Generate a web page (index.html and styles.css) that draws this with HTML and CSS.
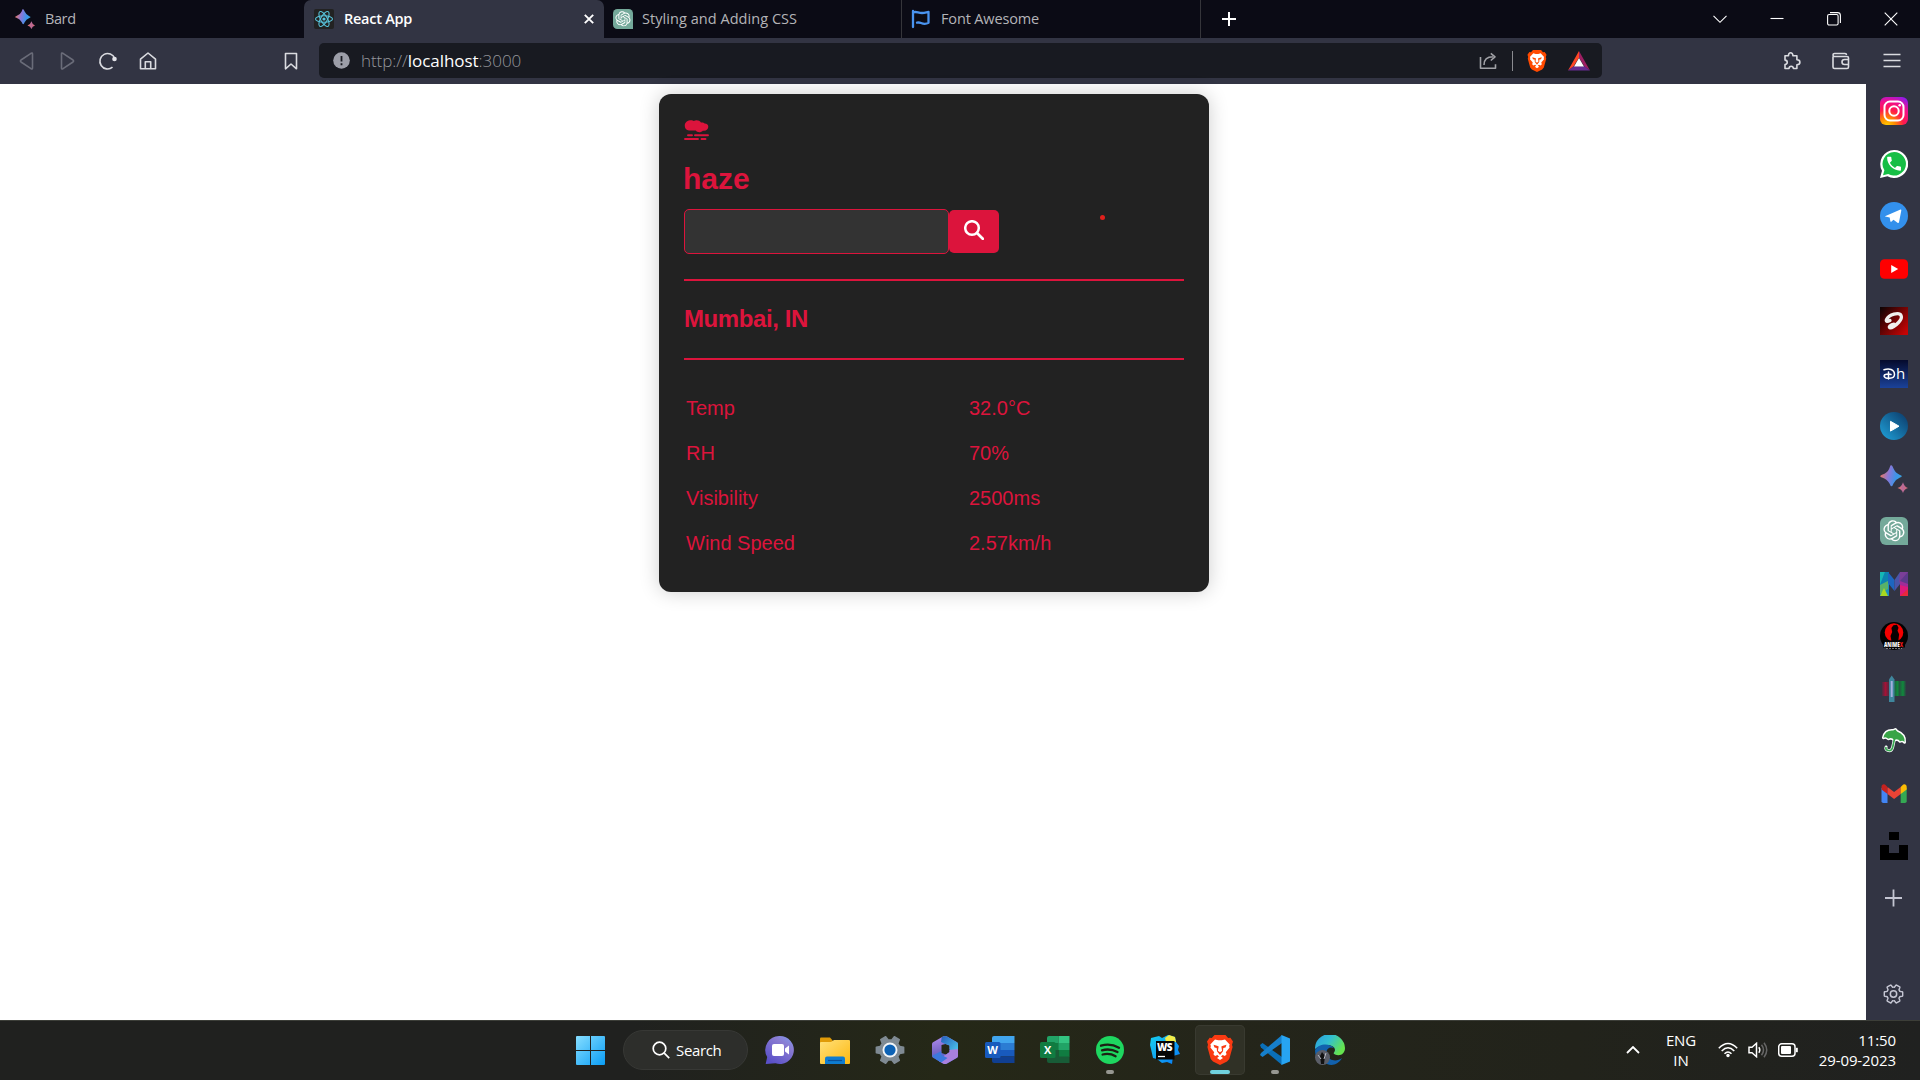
FILE: index.html
```html
<!DOCTYPE html>
<html lang="en">
<head>
<meta charset="utf-8">
<title>React App</title>
<link rel="stylesheet" href="styles.css">
</head>
<body>
<svg class="defs" width="0" height="0" aria-hidden="true">
  <defs>
    <linearGradient id="bardFill" x1="0" y1=".3" x2="1" y2=".5"><stop offset="0" stop-color="#f0785a"/><stop offset=".4" stop-color="#8a78d8"/><stop offset=".75" stop-color="#3d94e8"/><stop offset="1" stop-color="#3aa0dc"/></linearGradient>
    <linearGradient id="bardSmall" x1="0" y1="0" x2="1" y2="0"><stop offset="0" stop-color="#e8786a"/><stop offset=".5" stop-color="#b86a9a"/><stop offset="1" stop-color="#dc6a70"/></linearGradient>
    <symbol id="bard" viewBox="0 0 28 28"><path fill="url(#bardFill)" d="M11 0Q12.400 0 13.500 3.500Q15.500 8 20 10Q23.500 11.200 20 12.600Q15.500 14.500 13.500 18.500Q11.500 24 9.500 18.500Q7 14 2 12.400Q-1.500 11.200 2 9.800Q7.500 8 9.300 3.500Q10.300 0 11 0Z"/><path fill="url(#bardSmall)" d="M23 17.300Q24.200 21.800 28 23Q24.200 24.200 23 28Q21.800 24.200 17.500 23Q21.800 21.800 23 17.300Z"/></symbol>
    <symbol id="gpt" viewBox="0 0 28 28"><path fill="#74a99a" d="M6 0H22a6 6 0 0 1 6 6V28H6a6 6 0 0 1-6-6V6a6 6 0 0 1 6-6Z"/><path transform="translate(3.400 3.200) scale(.88)" fill="#fff" d="M22.2819 9.8211a5.9847 5.9847 0 0 0-.5157-4.9108 6.0462 6.0462 0 0 0-6.5098-2.9A6.0651 6.0651 0 0 0 4.9807 4.1818a5.9847 5.9847 0 0 0-3.9977 2.9 6.0462 6.0462 0 0 0 .7427 7.0966 5.98 5.98 0 0 0 .511 4.9107 6.051 6.051 0 0 0 6.5146 2.9001A5.9847 5.9847 0 0 0 13.2599 24a6.0557 6.0557 0 0 0 5.7718-4.2058 5.9894 5.9894 0 0 0 3.9977-2.9001 6.0557 6.0557 0 0 0-.7475-7.0729zm-9.022 12.6081a4.4755 4.4755 0 0 1-2.8764-1.0408l.1419-.0804 4.7783-2.7582a.7948.7948 0 0 0 .3927-.6813v-6.7369l2.02 1.1686a.071.071 0 0 1 .038.052v5.5826a4.504 4.504 0 0 1-4.4945 4.4944zm-9.6607-4.1254a4.4708 4.4708 0 0 1-.5346-3.0137l.142.0852 4.783 2.7582a.7712.7712 0 0 0 .7806 0l5.8428-3.3685v2.3324a.0804.0804 0 0 1-.0332.0615L9.74 19.9502a4.4992 4.4992 0 0 1-6.1408-1.6464zM2.3408 7.8956a4.485 4.485 0 0 1 2.3655-1.9728V11.6a.7664.7664 0 0 0 .3879.6765l5.8144 3.3543-2.0201 1.1685a.0757.0757 0 0 1-.071 0l-4.8303-2.7865A4.504 4.504 0 0 1 2.3408 7.872zm16.5963 3.8558L13.1038 8.364 15.1192 7.2a.0757.0757 0 0 1 .071 0l4.8303 2.7913a4.4944 4.4944 0 0 1-.6765 8.1042v-5.6772a.79.79 0 0 0-.407-.667zm2.0107-3.0231l-.142-.0852-4.7735-2.7818a.7759.7759 0 0 0-.7854 0L9.409 9.2297V6.8974a.0662.0662 0 0 1 .0284-.0615l4.8303-2.7866a4.4992 4.4992 0 0 1 6.6802 4.66zM8.3065 12.863l-2.02-1.1638a.0804.0804 0 0 1-.038-.0567V6.0742a4.4992 4.4992 0 0 1 7.3757-3.4537l-.142.0805L8.704 5.459a.7948.7948 0 0 0-.3927.6813zm1.0976-2.3654l2.602-1.4998 2.6069 1.4998v2.9994l-2.5974 1.4997-2.6067-1.4997Z"/></symbol>
    <symbol id="brave" viewBox="0 0 26 30"><path d="M7.500 0h11l2.700 3 2.200-.3L26 6.500l-1 3.200.6 2.300-3.300 12L20 26.500 13 30 6 26.500 3.700 24 .4 12 1 9.700 0 6.500 2.600 2.700l2.200.3Z"/><path fill="#fff" d="M8 4.500l3.300.8h3.400l3.300-.8 4.700 5-.6 1.500.5 1.500-3.800 4.700.8 2.100-1.700 1.700-2.300-.9-1.600 1.300L16 23l-3 2-3-2 2-1.600-1.600-1.300-2.300.9-1.700-1.700.8-2.100-3.800-4.700.5-1.500L3.300 9.500Z"/><path d="M6.500 9.800l3.500 1 1.700.8-.8 4.200 2.100 1.500 2.100-1.500-.8-4.200 1.700-.8 3.500-1-1 2.700-2.200.6-.3 3.200-3 3.700-3-3.700-.3-3.200-2.200-.6Z"/></symbol>
    <symbol id="gear" viewBox="0 0 24 24"><path transform="rotate(30 12 12)" d="M19.140 12.940c.04-.3.06-.61.06-.94 0-.32-.02-.64-.07-.94l2.030-1.580c.18-.14.23-.41.12-.61l-1.920-3.320c-.12-.22-.37-.29-.59-.22l-2.390.96c-.5-.38-1.030-.7-1.620-.94l-.36-2.540c-.04-.24-.24-.41-.48-.41h-3.840c-.24 0-.43.17-.47.41l-.36 2.540c-.59.24-1.130.57-1.620.94l-2.390-.96c-.22-.08-.47 0-.59.22L2.740 8.870c-.12.21-.08.47.12.61l2.030 1.580c-.05.3-.09.63-.09.94s.02.64.07.94l-2.030 1.580c-.18.14-.23.41-.12.61l1.920 3.320c.12.22.37.29.59.22l2.390-.96c.5.38 1.030.7 1.620.94l.36 2.540c.05.24.24.41.48.41h3.840c.24 0 .44-.17.47-.41l.36-2.540c.59-.24 1.130-.56 1.620-.94l2.390.96c.22.08.47 0 .59-.22l1.920-3.320c.12-.22.07-.47-.12-.61z"/></symbol>
  </defs>
</svg>

<header class="tabs">
  <div class="tab tab-first"><svg width="20" height="20"><use href="#bard"/></svg><span>Bard</span></div>
  <div class="tab tab-active">
    <svg width="20" height="20" viewBox="0 0 20 20"><rect width="20" height="20" rx="2" fill="#222"/><g fill="none" stroke="#58c4dc" stroke-width="1.100"><ellipse cx="10" cy="10" rx="8.500" ry="3.300"/><ellipse cx="10" cy="10" rx="8.500" ry="3.300" transform="rotate(60 10 10)"/><ellipse cx="10" cy="10" rx="8.500" ry="3.300" transform="rotate(120 10 10)"/></g><circle cx="10" cy="10" r="1.600" fill="#58c4dc"/></svg>
    <span>React App</span>
    <svg class="tab-close" width="10" height="10" viewBox="0 0 10 10"><path d="M.8.8l8.400 8.400M9.200.8L.8 9.200" stroke="#fff" stroke-width="1.900"/></svg>
  </div>
  <div class="tab tab-gpt"><svg width="20" height="20"><use href="#gpt"/></svg><span>Styling and Adding CSS</span></div>
  <div class="tab tab-fa"><svg width="20" height="20" viewBox="0 0 20 20" fill="none" stroke="#4a94f0" stroke-width="2.300" stroke-linecap="round" stroke-linejoin="round"><path d="M2 2v16M2 3.500c3-1.500 5 .5 9 .5 3 0 4-.7 6.500-1.200v11c-3 1.700-5 1.200-7.500.2-1-.4-2.500-.7-4-.3"/></svg><span>Font Awesome</span></div>
  <svg class="tab-new" width="14" height="14" viewBox="0 0 14 14"><path d="M7 0v14M0 7h14" stroke="#fff" stroke-width="2"/></svg>
  <div class="window-controls">
    <svg width="14" height="14" viewBox="0 0 14 14"><path d="M.5 3.800l6.500 6.500 6.500-6.500"/></svg>
    <svg width="14" height="14" viewBox="0 0 14 14"><path d="M.5 6.500h13"/></svg>
    <svg width="14" height="14" viewBox="0 0 14 14"><rect x=".6" y="2.500" width="10.500" height="10.500" rx="1.500"/><path d="M3 .6h7.500a2.900 2.900 0 0 1 2.900 2.900V11"/></svg>
    <svg width="14" height="14" viewBox="0 0 14 14"><path d="M.7.7l12.600 12.600M13.300.7L.7 13.300"/></svg>
  </div>
</header>

<nav class="toolbar">
  <div class="nav-buttons">
    <svg width="16" height="20" viewBox="0 0 16 20" class="dim"><path d="M13.500 3q0-1.600-1.500-.7L2 9q-1.200 1 0 2l10 6.700q1.500.9 1.500-.7Z"/></svg>
    <svg width="16" height="20" viewBox="0 0 16 20" class="dim"><path d="M2.500 3q0-1.600 1.500-.7L14 9q1.200 1 0 2L4 17.700q-1.500.9-1.500-.7Z"/></svg>
    <svg width="20" height="20" viewBox="0 0 20 20"><path d="M14.500 16.200A7.700 7.700 0 1 1 16.800 7.500"/><circle cx="16.500" cy="8" r="2.300" class="solid"/></svg>
    <svg width="20" height="20" viewBox="0 0 20 20"><path d="M2.500 8.200L10 2l7.500 6.200V17.700h-15ZM7.300 17.500v-6.700h5.400v6.700"/></svg>
    <svg class="bookmark" width="14" height="20" viewBox="0 0 14 20"><path d="M1.500 2.500h11v15.300L7 13l-5.500 4.800Z"/></svg>
  </div>
  <div class="address">
    <svg width="17" height="17" viewBox="0 0 17 17"><circle cx="8.500" cy="8.500" r="8.300" fill="#9c9ea8"/><path d="M8.500 4v5.500M8.500 11.200v2" stroke="#181a21" stroke-width="1.800"/></svg>
    <p class="url">http://<b>localhost</b>:3000</p>
    <svg class="share" width="18" height="18" viewBox="0 0 18 18"><path d="M1.500 5v11.300h15v-4M5 13c0-5 3-8.200 9-8.200M11.800 1.300L16 4.800l-4.200 3.700"/></svg>
    <i class="address-line"></i>
    <svg class="shield" width="20" height="22" fill="#ff4a00"><use href="#brave"/></svg>
    <svg width="22" height="20" viewBox="0 0 22 20"><path d="M11 0v6.500L5.500 15.500 0 19.500Z" fill="#ff4724"/><path d="M11 0l11 19.500-5.500-4L11 6.500Z" fill="#9e1f63"/><path d="M0 19.500l5.500-4.200h11l5.500 4.200Z" fill="#662d91"/><path d="M11 7l5 8.500H6Z" fill="#fff"/></svg>
  </div>
  <div class="extras">
    <svg width="18" height="18" viewBox="0 0 18 18"><path d="M2 3.800h3.500c-.3-4 4.500-4 4.400 0h4v4c4 0 4 5 0 5v3.700h-3.500c-.2-3-4.200-3-4.400 0H2v-4c3-.4 3-4.200 0-4.400Z"/></svg>
    <svg width="18" height="18" viewBox="0 0 18 18"><path d="M1 4.500V15q0 1.500 1.500 1.500H15q1.500 0 1.500-1.500V6q0-1.500-1.500-1.500H2.500Q1 4.500 1 3t1.500-1.500H13q1.500 0 1.500 1.500M16.500 7.500h-4a2.500 2.500 0 0 0 0 5h4Z"/></svg>
    <svg width="18" height="18" viewBox="0 0 18 18"><path d="M.5 2.500h17M.5 8.500h17M.5 14.500h17"/></svg>
  </div>
</nav>

<div class="viewport">
  <main class="page">
    <section class="card">
      <svg class="cloud" width="25" height="20" viewBox="0 0 25 20"><path d="M6 .3C8 .1 9 .5 9.800 1 12-.5 15.500 0 17 2.500c2-.1 3 .3 3.500 1 6.500.2 3.800 8.500-1.700 7.200-1.800 2.100-5.800 1.900-7-.2H5C-.8 10-.8 1 6 .3Z"/><path d="M4 15.200h4M11 15.200h13M1 19h13M17.500 19h4" fill="none" stroke="#dc143c" stroke-width="1.900" stroke-linecap="round"/></svg>
      <h1>haze</h1>
      <div class="search-row">
        <input class="city" type="text" aria-label="City">
        <button class="go" aria-label="Search"><svg width="20" height="20" viewBox="0 0 20 20"><circle cx="8" cy="8" r="6.800" fill="none" stroke="#fff" stroke-width="2.500"/><path d="M13 13l5.800 5.800" stroke="#fff" stroke-width="2.700" stroke-linecap="round"/></svg></button>
        <i class="dot"></i>
      </div>
      <h2>Mumbai, IN</h2>
      <dl class="readings">
        <dt>Temp</dt><dd>32.0°C</dd>
        <dt>RH</dt><dd>70%</dd>
        <dt>Visibility</dt><dd>2500ms</dd>
        <dt>Wind Speed</dt><dd>2.57km/h</dd>
      </dl>
    </section>
  </main>
  <aside class="sidebar">
    <svg viewBox="0 0 28 28"><defs><radialGradient id="ig" cx=".25" cy="1.050" r="1.200"><stop offset="0" stop-color="#ffd600"/><stop offset=".25" stop-color="#ff8a00"/><stop offset=".5" stop-color="#ff1a4b"/><stop offset=".75" stop-color="#f0108c"/><stop offset="1" stop-color="#8a1cf0"/></radialGradient></defs><rect width="28" height="28" rx="6" fill="url(#ig)"/><g fill="none" stroke="#fff" stroke-width="2"><rect x="4.500" y="4.500" width="19" height="19" rx="5.500"/><circle cx="14" cy="14" r="4.700"/></g><circle cx="19.700" cy="8.300" r="1.300" fill="#fff"/></svg>
    <svg viewBox="0 0 28 28"><path d="M14 0a14 14 0 1 1-6.500 26.300L0 28l2-7.200A14 14 0 0 1 14 0Z" fill="#fff"/><path d="M14.200 2a11.800 11.800 0 1 1-6 22L3 25.200l1.400-5A11.900 11.900 0 0 1 14.200 2Z" fill="#16be45"/><path transform="translate(4.800 4.500) scale(.77)" fill="#fff" d="M6.620 10.790c1.440 2.830 3.760 5.140 6.590 6.590l2.200-2.200c.27-.27.67-.36 1.020-.24 1.120.37 2.330.57 3.570.57.55 0 1 .45 1 1V20c0 .55-.45 1-1 1-9.390 0-17-7.610-17-17 0-.55.45-1 1-1h3.500c.55 0 1 .45 1 1 0 1.250.2 2.450.57 3.570.11.35.03.74-.25 1.020l-2.200 2.200z"/></svg>
    <svg viewBox="0 0 28 28"><circle cx="14" cy="14" r="14" fill="#3390ec"/><path d="M5 14.200L20.500 7.600q1-.2.800 1L19 20.300q-.4 1.200-1.500.5l-4-3-2.200 2q-.8.300-1-.8l-.6-3.500-4.500-1q-.7-.2-.2-.3Z" fill="#fff"/></svg>
    <svg viewBox="0 0 28 28"><rect y="4.200" width="28" height="19.600" rx="4.500" fill="#f00"/><path d="M11.200 10v8l7-4Z" fill="#fff"/></svg>
    <svg viewBox="0 0 28 28"><defs><linearGradient id="air" x1="0" y1="0" x2="1" y2=".8"><stop offset="0" stop-color="#0a0303"/><stop offset="1" stop-color="#c40404"/></linearGradient></defs><rect width="28" height="28" fill="url(#air)"/><path fill="none" stroke="#f0f0ee" stroke-width="3.300" stroke-linecap="round" stroke-linejoin="round" d="M10 13.500C3.500 17 6 9.500 14 7.200c8-2 9.500 3 4.500 8.300-3 3.200-7 5.300-8.500 5.300-2-.3.500-3.300 4-3.600"/></svg>
    <svg viewBox="0 0 28 28"><defs><linearGradient id="dis" x2="0" y2="1"><stop offset="0" stop-color="#050a2c"/><stop offset="1" stop-color="#1b4299"/></linearGradient></defs><rect width="28" height="28" fill="url(#dis)"/><path fill="none" stroke="#fff" stroke-width="1.500" stroke-linecap="round" d="M4 9.800c5-1.800 10.500-.5 10.500 4.700 0 5-9.500 4.500-10.500 1.400 0-1.800 4-2.200 7-1.400M8.500 12v7"/><text x="16" y="19" class="mark dh">h</text></svg>
    <svg viewBox="0 0 28 28"><defs><linearGradient id="jio" x1="1" x2="0" y2="1"><stop offset="0" stop-color="#0b3766"/><stop offset="1" stop-color="#20a4dc"/></linearGradient></defs><circle cx="14" cy="14" r="14" fill="url(#jio)"/><path d="M10.500 9.300v9.800l8.500-4.900Z" fill="#fff" stroke="#fff" stroke-linejoin="round"/></svg>
    <svg><use href="#bard"/></svg>
    <svg><use href="#gpt"/></svg>
    <svg viewBox="0 0 28 28"><path d="M0 2h9v24H0Z" fill="#1a8fc0"/><path d="M0 2h5L0 15Z" fill="#16b8b4"/><path d="M5 2h4l-1 9-8 4Z" fill="#0d84ae"/><path d="M0 15l8-4v8l-8 5Z" fill="#58b268"/><path d="M0 26l4-8 4 8Z" fill="#a8d820"/><path d="M8 2l6.500 8v11L8 13Z" fill="#1d66c0"/><path d="M20 2l-5.500 8v11L20 14Z" fill="#4a55a8"/><path d="M20 2h8v24h-8Z" fill="#a02c98"/><path d="M20 2h8L19 13Z" fill="#7a3f98"/><path d="M28 2v12l-8-3Z" fill="#5c3a8c"/><path d="M20 15l8 2v9h-8Z" fill="#dc1a7c"/><path d="M20 26l8-7v7Z" fill="#e8283c"/></svg>
    <svg viewBox="0 0 28 28"><circle cx="14" cy="14" r="14" fill="#030303"/><circle cx="14" cy="10.500" r="9.300" fill="#f40000"/><path d="M11.500 19l-1-5 1.700-4-.8-4 2-2.800 3.500-.4 1.600 3-1 3 1.600 3.500-.8 6.700Z" fill="#090202"/><rect x="3" y="18.500" width="22" height="7" fill="#030303"/><text x="4" y="24.500" textLength="19" lengthAdjust="spacingAndGlyphs" class="mark anime">ANIME<tspan class="red">X</tspan></text><path d="M6 26.500h16" stroke="#aaa" stroke-width=".7" stroke-dasharray="2 1"/></svg>
    <svg viewBox="0 0 28 28"><defs><linearGradient id="specL"><stop offset="0" stop-color="#a51236" stop-opacity=".2"/><stop offset=".5" stop-color="#a51236"/><stop offset="1" stop-color="#a51236" stop-opacity=".3"/></linearGradient><linearGradient id="specR"><stop offset="0" stop-color="#108a3c" stop-opacity=".4"/><stop offset=".3" stop-color="#108a3c"/><stop offset=".45" stop-color="#108a3c" stop-opacity=".4"/><stop offset=".75" stop-color="#108a3c"/><stop offset="1" stop-color="#108a3c" stop-opacity=".1"/></linearGradient></defs><path fill="url(#specL)" d="M2 7h7v14H2Z"/><path fill="url(#specR)" d="M14 6h12v15H14Z"/><path d="M9 4.500l2.700-4 2.800 4v22.500H9Z" fill="#4295ad" opacity=".85"/><path d="M11.700 6v16" stroke="#a4afe0" stroke-width="2"/></svg>
    <svg viewBox="0 0 28 28"><g transform="rotate(12 14 14)"><g stroke="#fff" stroke-width="3" stroke-linejoin="round" stroke-linecap="round" fill="none"><path d="M14 11v9q0 4.500-3.500 4.500T7.500 21.500"/><path d="M3 13Q3 5 11 4l2-1.500L15 4q9 1.500 9.500 9-2-2-4.500 0-3-2.500-6 0-3-2.500-6 0-3-2-5 0Z"/></g><path d="M14 11v9q0 4.500-3.500 4.500T7.500 21.500" stroke="#38a852" stroke-width="1.700" fill="none"/><path d="M3 13Q3 5 11 4l2-1.500L15 4q9 1.500 9.500 9-2-2-4.500 0-3-2.500-6 0-3-2.500-6 0-3-2-5 0Z" fill="#38a447"/></g></svg>
    <svg viewBox="0 0 28 28"><path d="M1.500 8h6v15H3.300q-1.800 0-1.800-1.800Z" fill="#4285f4"/><path d="M20.700 8h6v13.200q0 1.800-1.800 1.800h-4.200Z" fill="#34a853"/><path d="M7.500 7l6.600 5 6.600-5v7l-6.600 5-6.600-5Z" fill="#ea4335"/><path d="M1.500 8.500V7C1.500 4 4.500 3.500 6 5.500L7.500 7v7L1.500 9.500Z" fill="#c5221f"/><path d="M26.700 8.500V7c0-3-3-3.500-4.500-1.500L20.700 7v7l6-4.500Z" fill="#fbbc04"/></svg>
    <svg viewBox="0 0 28 28"><path d="M9 0h10v8H9ZM0 13h9v8h10v-8h9v15H0Z"/></svg>
    <svg class="line" viewBox="0 0 28 28"><path d="M13.500 4.500v17M5 13h17" stroke-width="1.800"/></svg>
    <svg class="line sidebar-gear" viewBox="0 0 28 28"><use href="#gear" x="2" y="2.500" width="23" height="23"/><circle cx="13.500" cy="14" r="3.200" stroke-width="1.500"/></svg>
  </aside>
</div>

<footer class="taskbar">
  <div class="apps">
    <svg class="start" width="29" height="29" viewBox="0 0 29 29"><defs><linearGradient id="win" x2="1" y2="1"><stop offset="0" stop-color="#86deff"/><stop offset="1" stop-color="#0a9df5"/></linearGradient></defs><path d="M1 0h13v14H0V1Q0 0 1 0ZM15 0h13q1 0 1 1v13H15ZM0 15h14v14H1q-1 0-1-1ZM15 15h14v13q0 1-1 1H15Z" fill="url(#win)"/></svg>
    <div class="search"><svg width="18" height="18" viewBox="0 0 18 18"><circle cx="7.500" cy="7.500" r="6.300"/><path d="M12.200 12.200l5 5"/></svg><span>Search</span></div>
    <div class="app"><svg viewBox="0 0 30 30"><defs><linearGradient id="chat" x1="1" x2=".3" y2="1"><stop offset="0" stop-color="#7f9cf0"/><stop offset=".35" stop-color="#8a7cd2"/><stop offset="1" stop-color="#5a50c8"/></linearGradient></defs><path d="M15 1a14 14 0 1 1-4.500 27.300L1 29q-.5 0 0-1.500l1.200-5.500A14 14 0 0 1 15 1Z" fill="url(#chat)"/><rect x="7" y="9" width="12" height="12" rx="2" fill="#fff"/><path d="M20 13.500l4-3v9l-4-3Z" fill="#fff"/></svg></div>
    <div class="app"><svg viewBox="0 0 30 30"><defs><linearGradient id="fold" x2="1" y2="1"><stop offset="0" stop-color="#ffe07a"/><stop offset="1" stop-color="#fdb910"/></linearGradient></defs><path d="M0 3.500Q0 2.500 1 2.500h9l3 3.500v6H0Z" fill="#e09b08"/><path d="M0 8q0-1 1-1h10l3-2h15q1 0 1 1V28q0 1-1 1H1q-1 0-1-1Z" fill="url(#fold)"/><path d="M5 29v-5.500q0-2 2-2h16q2 0 2 2V29Z" fill="#0e7cd0"/><path d="M8 25.500h14" stroke="#0a4f98" stroke-width="1.200"/></svg></div>
    <div class="app"><svg viewBox="0 0 30 30"><use href="#gear" x="-3" y="-3" width="36" height="36" fill="#7f8a93"/><circle cx="15" cy="15" r="7.500" fill="#f2f5f8"/><circle cx="15" cy="15" r="5.600" fill="#0d62b5"/></svg></div>
    <div class="app"><svg viewBox="0 0 30 30"><defs><linearGradient id="o1" x1=".3" x2=".5" y2="1"><stop offset="0" stop-color="#b48cf0"/><stop offset=".5" stop-color="#7a68c8"/><stop offset="1" stop-color="#2a62d0"/></linearGradient><linearGradient id="o2" x2="1" y2="1"><stop offset="0" stop-color="#2458b8"/><stop offset="1" stop-color="#54dcf8"/></linearGradient><clipPath id="hex"><path clip-rule="evenodd" d="M13 1.500q2-1 4 0l10 5.800q1 .7 1 2v11.400q0 1.300-1 2l-10 5.800q-2 1-4 0L3 22.700q-1-.7-1-2V9.300q0-1.300 1-2ZM11.500 10v8l4.500 1.500 3.500-2.500v-6.500L15.500 9Z"/></clipPath></defs><g clip-path="url(#hex)"><path d="M0 0h30v30H0Z" fill="url(#o1)"/><path d="M12 0h18v15l-3 5-8-6V11L11 7Z" fill="url(#o2)"/><path d="M30 13v17H6l5-7 8-6v-2l9-1Z" fill="#a880de"/><path d="M2 21l9.500-5v4l6 3-7 5Z" fill="#3c78dc"/></g></svg></div>
    <div class="app"><svg viewBox="0 0 30 30"><path d="M9 1h20.500v7H7V3q0-2 2-2Z" fill="#41a5ee"/><path d="M7 8h22.500v7H7Z" fill="#2b7cd3"/><path d="M7 15h22.500v6.500H7Z" fill="#185abd"/><path d="M7 21.500h22.500V28H9q-2 0-2-2Z" fill="#103f91"/><rect y="7" width="15.500" height="16" rx="1.500" fill="#185abd"/><text x="7.600" y="19" class="mark office">W</text></svg></div>
    <div class="app"><svg viewBox="0 0 30 30"><path d="M7 3q0-2 2-2h9.500v14H7Z" fill="#21a366"/><path d="M18.500 1h11v7h-11Z" fill="#33c481"/><path d="M7 8h11.500v7H7Z" fill="#107c41"/><path d="M18.500 8h11v7h-11Z" fill="#21a366"/><path d="M7 15h11.500v7H7Z" fill="#185c37"/><path d="M18.500 15h11v7h-11Z" fill="#107c41"/><path d="M7 21.500h22.500V28H9q-2 0-2-2Z" fill="#185c37"/><rect y="7" width="15.500" height="16" rx="1.500" fill="#107c41"/><text x="7.600" y="19" class="mark office">X</text></svg></div>
    <div class="app running"><svg viewBox="0 0 30 30"><circle cx="15" cy="15" r="14" fill="#1ed760"/><path d="M6 10.700q9.500-2.700 18 2M7 15.300q8-2.200 15.500 1.700M7.600 19.500q7-1.700 13 1.700" fill="none" stroke="#1c2114" stroke-width="2.300" stroke-linecap="round"/></svg></div>
    <div class="app"><svg viewBox="0 0 30 30"><defs><linearGradient id="ws" y2="1"><stop offset="0" stop-color="#18d0f0"/><stop offset="1" stop-color="#0878f5"/></linearGradient></defs><path d="M1 3l8-2 3 2 6-3 7 2 1 5 3 4-1 4 2 4-7 2-1 8-5-2-5 1-5-4-4-1-2-9-1-4Z" fill="url(#ws)"/><path d="M15 3l4-3 6 2 1 5H16Z" fill="#f2ed48"/><rect x="6" y="6" width="18.500" height="18.500" fill="#050505"/><text x="7" y="15.500" textLength="15.500" class="mark ws">WS</text><path d="M8 21.500h7" stroke="#fff" stroke-width="1.300"/></svg></div>
    <div class="app running current"><svg viewBox="0 0 30 30" fill="#fa3a12"><use href="#brave" x="2" y="0" width="26" height="30"/></svg></div>
    <div class="app running"><svg viewBox="0 0 30 30"><path d="M0 10l2.500-2L22 22v8L1 12.500Z" fill="#0a6fb8"/><path d="M0 20l2.500 2L22 8V0L1 18Z" fill="#167fcb"/><path d="M21.500 0L30 3.500v23L21.500 30Z" fill="#27a4f2"/></svg></div>
    <div class="app"><svg viewBox="0 0 30 30"><defs><linearGradient id="edge" x2="1" y2=".5"><stop offset="0" stop-color="#2a9be0"/><stop offset=".5" stop-color="#32bfd0"/><stop offset="1" stop-color="#65e34f"/></linearGradient></defs><path d="M0 14A15 14.500 0 0 1 30 13c0 6-5 8.500-10 6.500-3-1.200 0-2 0-4.500C20 9 7 8 0 14Z" fill="url(#edge)"/><path d="M0 15C4 8 15 8 19 13c-5-2-9 2-7 7 2 6 10 7 15 3-4 7-10 8-15 6Q0 27 0 15Z" fill="#1261ad"/><circle cx="7.500" cy="22.500" r="7.500" fill="#5b5e68"/><path d="M7 17l3 4-1 8H6l-1-8Z" fill="#111"/><path d="M3 20l3 4M11 18l-2 6" stroke="#b8bac4"/></svg></div>
  </div>
  <div class="tray">
    <svg class="more" width="14" height="8" viewBox="0 0 14 8"><path d="M1 7l6-6 6 6" stroke-width="1.800"/></svg>
    <p class="lang">ENG<br>IN</p>
    <svg width="20" height="16" viewBox="0 0 20 16"><g stroke-width="1.500"><path d="M.8 6.200q9.200-9.500 18.400 0M3.700 9q6.300-6.500 12.600 0M6.500 11.700q3.500-3.500 7 0"/></g><circle cx="10" cy="13.500" r="1.700" fill="#fff" stroke="none"/></svg>
    <svg width="20" height="16" viewBox="0 0 20 16"><path d="M1 5.200h3L8.500 1.300v13.400L4 10.800H1ZM10.800 5.300q2 2.700 0 5.400"/><path d="M13.500 2.800q4 5.200 0 10.400M16 .7q5.500 7.300 0 14.600" stroke="#666"/></svg>
    <svg width="20" height="16" viewBox="0 0 20 16"><rect x=".7" y="1.800" width="16.300" height="12.400" rx="3"/><rect x="3" y="4" width="10" height="8" rx="1" fill="#fff" stroke="none"/><path d="M18.800 5.800v4.400" stroke-width="2"/></svg>
    <p class="clock">11:50<br>29-09-2023</p>
  </div>
</footer>
</body>
</html>
```
FILE: styles.css
```css
* { box-sizing: border-box; }
body {
  margin: 0;
  width: 1920px;
  height: 1080px;
  overflow: hidden;
  display: flex;
  flex-direction: column;
  background: #fff;
  font-family: "Open Sans", "Noto Sans", sans-serif;
}
svg { display: block; flex: none; }
p, h1, h2, dl, dd { margin: 0; }
.defs { position: absolute; }

/* Tab strip */
.tabs { display: flex; height: 38px; background: #0b0b15; color: #b4b4b8; font-size: 14.500px; letter-spacing: .05px; }
.tab { display: flex; align-items: center; gap: 9px; height: 38px; white-space: nowrap; }
.tab span { padding-bottom: 2px; }
.tab-first { width: 304px; padding-left: 15px; gap: 10px; letter-spacing: -.4px; }
.tab-active { width: 300px; padding: 0 10px; gap: 10px; background: #323443; color: #fff; font-weight: 600; letter-spacing: -.25px; border-radius: 7px 7px 0 0; }
.tab-close { margin-left: auto; }
.tab-gpt { width: 298px; padding-left: 9px; border-right: 1px solid #35353a; }
.tab-fa { width: 299px; padding-left: 9px; gap: 10px; border-right: 1px solid #35353a; letter-spacing: -.15px; }
.tab-new { align-self: center; margin-left: 21px; }
.window-controls { display: flex; align-items: center; gap: 43px; margin-left: auto; padding-right: 22px; }
.window-controls svg { fill: none; stroke: #fff; stroke-width: 1.100; }

/* Toolbar */
.toolbar { display: flex; align-items: center; height: 46px; padding: 0 0 1px 19px; background: #323443; }
.nav-buttons { display: flex; align-items: center; width: 300px; gap: 24px; }
.nav-buttons svg, .extras svg, .share { fill: none; stroke: #dadbe0; stroke-width: 1.600; stroke-linejoin: round; }
.nav-buttons .dim { stroke: #6a6c79; width: 16px; }
.nav-buttons .dim + svg:not(.dim) { margin-left: -1px; }
.nav-buttons svg:nth-child(4) { margin-left: -4px; }
.nav-buttons .bookmark { margin-left: 102px; }
.nav-buttons .solid { fill: #e4e4ea; stroke: none; }
.address { display: flex; align-items: center; width: 1283px; height: 35px; padding: 0 12px 0 14px; border-radius: 5px; background: #181a21; }
.url { flex: 1; margin-left: 11px; padding-bottom: 1px; font-size: 17px; letter-spacing: -.05px; font-weight: 300; color: #96979c; }
.url b { font-weight: 400; color: #fff; }
.address .share { margin-right: 1px; stroke: #a0a1a6; }
.address-line { width: 1px; height: 20px; margin: 0 14px; background: #8a8b90; }
.shield { margin-right: 21px; }
.extras { display: flex; gap: 31px; margin-left: auto; padding-right: 19px; }
.extras svg:last-child { margin-left: 2px; }

/* Page */
.viewport { display: flex; height: 936px; }
.page { flex: 1; display: flex; justify-content: center; align-items: flex-start; padding: 10px 0 0 2px; }
.card {
  width: 550px;
  height: 498px;
  padding: 26px 25px 0;
  border-radius: 12px;
  background: #222;
  color: #dc143c;
  font-family: "Liberation Sans", Arial, sans-serif;
  box-shadow: 0 0 20px rgba(0, 0, 0, .2);
}
.cloud { fill: #dc143c; }
h1 { margin-top: 21px; font-size: 30px; line-height: 36px; text-indent: -1px; }
.search-row { display: flex; align-items: center; height: 45px; margin-top: 12px; }
.city { width: 265px; height: 45px; border: 1px solid #dc143c; border-radius: 5px; background: #333; }
.go { display: flex; align-items: flex-start; justify-content: center; width: 50px; height: 43px; padding: 10px 0 0; border: 0; border-radius: 5px; background: #dc143c; }
.dot { width: 5px; height: 5px; margin: -29px 0 0 101px; border-radius: 50%; background: #e0201c; }
h2 { display: flex; align-items: center; height: 81px; margin-top: 25px; padding-bottom: 1px; border: solid #dc143c; border-width: 2px 0; font-size: 24px; letter-spacing: -.4px; }
.readings { display: grid; grid-template-columns: 283px auto; grid-auto-rows: 45px; margin: 26px 0 0 2px; align-items: center; font-size: 20px; }

/* Sidebar */
.sidebar { display: flex; flex-direction: column; align-items: flex-start; gap: 24.500px; width: 54px; padding: 13px 0 0 14px; background: #323443; }
.sidebar svg { width: 28px; height: 28px; }
.line { fill: none; stroke: #c4c5d2; stroke-width: 1.500; }
.sidebar-gear { margin-top: 43px; }
.mark { fill: #fff; font-family: "Open Sans", sans-serif; }
.dh { font-size: 15px; font-weight: 400; }
.anime { font-size: 6px; font-weight: 800; }
.red { fill: #f01818; }
.office { font-size: 11px; font-weight: 700; text-anchor: middle; }
.ws { font-size: 10px; font-weight: 800; }

/* Taskbar */
.taskbar { display: flex; align-items: center; height: 60px; padding-bottom: 1px; border-top: 1px solid #3c3e38; background: linear-gradient(90deg, #20211f 0, #20211f 33%, #252817 49%, #24251a 64%, #22231b 82%, #202120); color: #fff; }
.apps { display: flex; align-items: center; padding-left: 576px; }
.search { display: flex; align-items: center; gap: 6px; width: 125px; height: 40px; margin: 0 7px 0 18px; padding-left: 28px; border: 1px solid #373835; border-radius: 20px; background: #2d2e2b; font-size: 15px; letter-spacing: -.35px; }
.search svg { fill: none; stroke: #fff; stroke-width: 1.700; }
.search span { padding-bottom: 1px; }
.app { position: relative; display: flex; align-items: center; justify-content: center; width: 50px; height: 50px; margin-right: 5px; border-radius: 5px; }
.app svg { width: 30px; height: 30px; }
.running::after { content: ""; position: absolute; bottom: 1px; left: 21px; width: 8px; height: 4px; border-radius: 2px; background: #969791; }
.current { background: #303126; box-shadow: inset 0 0 0 1px #393a30; }
.current::after { left: 15px; width: 20px; background: #70d2de; }
.tray { display: flex; align-items: center; gap: 10px; margin-left: auto; padding-right: 24px; }
.tray svg { fill: none; stroke: #fff; stroke-width: 1.500; }
.tray .more { margin-right: 11px; }
.tray p { padding-bottom: 1px; font-size: 15px; line-height: 20px; letter-spacing: -.1px; }
.lang { width: 40px; text-align: center; margin-right: 7px; }
.clock { width: 88px; text-align: right; white-space: nowrap; }
```
